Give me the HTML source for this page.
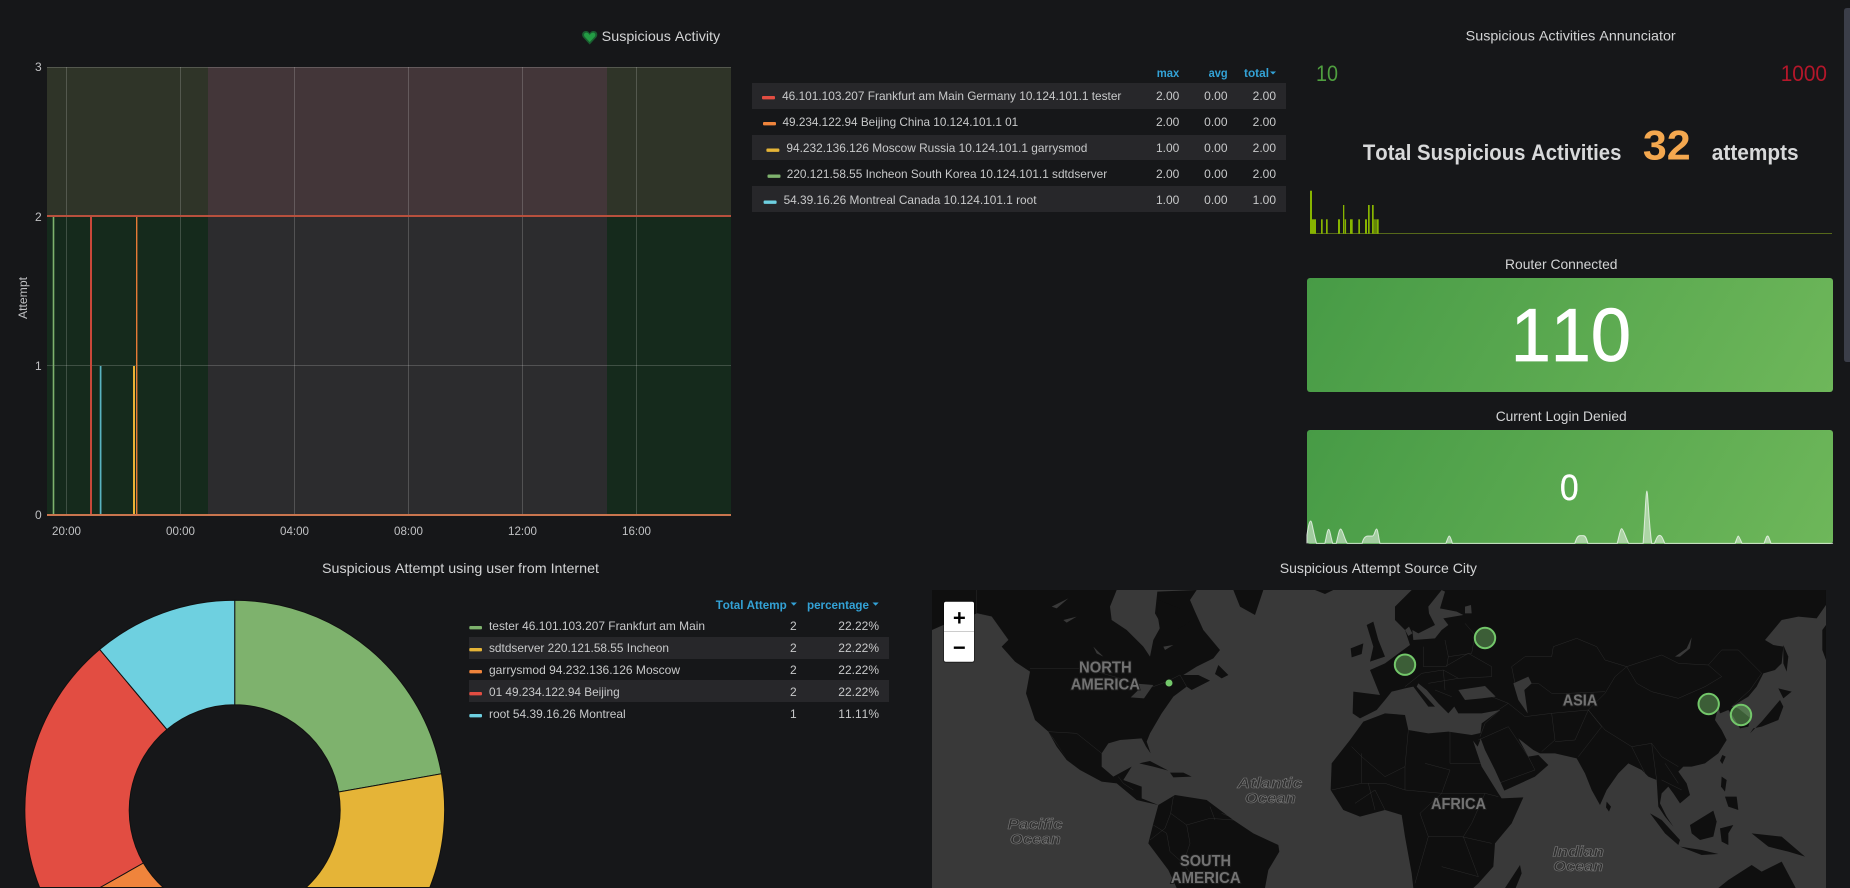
<!DOCTYPE html>
<html><head><meta charset="utf-8"><title>Suspicious Activity</title>
<style>
html,body{margin:0;padding:0;background:#161719;width:1850px;height:888px;overflow:hidden}
svg{display:block}
text{font-family:"Liberation Sans",sans-serif;font-kerning:none}
.t{font-size:14px;fill:#d3d4d5}
.l{font-size:12px;fill:#c8c9ca}
.h{font-size:12px;fill:#33a2d6;font-weight:bold}
.a{font-size:12px;fill:#c0c1c3}
.c{font-size:16px;font-weight:bold;fill:#727272;stroke:#1c1c1c;stroke-width:2px;paint-order:stroke}
.o{font-size:15px;font-style:italic;font-weight:bold;fill:#2e2e2e;stroke:#7a7a7a;stroke-width:.6px}
.b{fill:none;stroke:#3c3c3c;stroke-width:.9;vector-effect:non-scaling-stroke}
.g{stroke:#fff;stroke-opacity:.18;stroke-width:1}
</style></head><body>
<svg width="1850" height="888" viewBox="0 0 1850 888" xmlns="http://www.w3.org/2000/svg">
<defs>
<linearGradient id="g1" gradientUnits="userSpaceOnUse" x1="1348" y1="207" x2="1792" y2="463"><stop offset="0" stop-color="#479b46"/><stop offset="1" stop-color="#6eb75a"/></linearGradient>
<linearGradient id="g2" gradientUnits="userSpaceOnUse" x1="1348" y1="359" x2="1792" y2="615"><stop offset="0" stop-color="#479b46"/><stop offset="1" stop-color="#6eb75a"/></linearGradient>
<clipPath id="mc"><rect x="932" y="590" width="894" height="298"/></clipPath>
</defs>
<rect width="1850" height="888" fill="#161719"/>

<!-- Graph title -->
<path d="M589.7 44.5 L583 37.2 C580.8 34 583 30.6 586.4 31 C588 31.2 589 32.2 589.7 33.2 C590.4 32.2 591.4 31.2 593 31 C596.4 30.6 598.6 34 596.4 37.2 Z" fill="#1a5e30"/>
<path d="M589.7 42 L584.6 36.6 C583.2 34.4 584.6 32.4 586.8 32.7 C588 32.9 589 33.8 589.7 35 C590.4 33.8 591.4 32.9 592.6 32.7 C594.8 32.4 596.2 34.4 594.8 36.6 Z" fill="#239c44"/>
<text class="t" x="601.7" y="41" textLength="118.5" lengthAdjust="spacingAndGlyphs">Suspicious Activity</text>

<!-- Graph -->
<rect x="47" y="67" width="161" height="149" fill="#2f3428"/>
<rect x="208" y="67" width="399" height="149" fill="#433639"/>
<rect x="607" y="67" width="124" height="149" fill="#2f3428"/>
<rect x="47" y="216" width="161" height="299" fill="#152a1c"/>
<rect x="208" y="216" width="399" height="299" fill="#2c2c2e"/>
<rect x="607" y="216" width="124" height="299" fill="#152a1c"/>
<g class="g">
<line x1="66.5" y1="67" x2="66.5" y2="515"/><line x1="180.5" y1="67" x2="180.5" y2="515"/><line x1="294.5" y1="67" x2="294.5" y2="515"/><line x1="408.5" y1="67" x2="408.5" y2="515"/><line x1="522.5" y1="67" x2="522.5" y2="515"/><line x1="636.5" y1="67" x2="636.5" y2="515"/>
<line x1="47" y1="67.5" x2="731" y2="67.5"/><line x1="47" y1="365.5" x2="731" y2="365.5"/>
</g>
<rect x="53" y="216" width="1" height="299" fill="#7eb26d"/>
<rect x="52" y="216" width="3" height="299" fill="#7eb26d" opacity=".3"/>
<rect x="90" y="216" width="2" height="299" fill="#c9483a"/>
<rect x="99.5" y="366" width="2" height="149" fill="#2a6d75"/>
<rect x="100.3" y="366" width="1" height="149" fill="#6ed0e0"/>
<rect x="133" y="366" width="2" height="149" fill="#e9b135"/>
<rect x="136" y="216" width="1.4" height="299" fill="#e57a36"/>
<rect x="47" y="215" width="684" height="2" fill="#b8503d"/>
<rect x="47" y="514" width="684" height="2" fill="#c9754e"/>
<text class="a" x="41.7" y="71" text-anchor="end">3</text>
<text class="a" x="41.7" y="221" text-anchor="end">2</text>
<text class="a" x="41.7" y="370" text-anchor="end">1</text>
<text class="a" x="41.7" y="519" text-anchor="end">0</text>
<text class="a" transform="translate(27,319) rotate(-90)" textLength="42" lengthAdjust="spacingAndGlyphs">Attempt</text>
<text class="a" x="52" y="535" textLength="29" lengthAdjust="spacingAndGlyphs">20:00</text>
<text class="a" x="166" y="535" textLength="29" lengthAdjust="spacingAndGlyphs">00:00</text>
<text class="a" x="280" y="535" textLength="29" lengthAdjust="spacingAndGlyphs">04:00</text>
<text class="a" x="394" y="535" textLength="29" lengthAdjust="spacingAndGlyphs">08:00</text>
<text class="a" x="508" y="535" textLength="29" lengthAdjust="spacingAndGlyphs">12:00</text>
<text class="a" x="622" y="535" textLength="29" lengthAdjust="spacingAndGlyphs">16:00</text>

<!-- Graph legend -->
<rect x="752" y="83" width="534" height="26" fill="#27272a"/>
<rect x="752" y="135" width="534" height="25" fill="#27272a"/>
<rect x="752" y="186" width="534" height="26" fill="#27272a"/>
<text class="h" x="1156.8" y="77" textLength="22.5" lengthAdjust="spacingAndGlyphs">max</text>
<text class="h" x="1208.6" y="77" textLength="19" lengthAdjust="spacingAndGlyphs">avg</text>
<text class="h" x="1244" y="77" textLength="25" lengthAdjust="spacingAndGlyphs">total</text>
<path d="M1270 71.5h6l-3 3z" fill="#33a2d6"/>
<rect x="762" y="96" width="13" height="3.4" rx="1" fill="#e24d42"/>
<rect x="763" y="122" width="13" height="3.4" rx="1" fill="#ef843c"/>
<rect x="766.4" y="148.5" width="13" height="3.4" rx="1" fill="#e5b437"/>
<rect x="767.5" y="174.5" width="13" height="3.4" rx="1" fill="#7eb26d"/>
<rect x="763.6" y="200.5" width="13" height="3.4" rx="1" fill="#6ed0e0"/>
<text class="l" x="782.1" y="100" textLength="339.3" lengthAdjust="spacingAndGlyphs">46.101.103.207 Frankfurt am Main Germany 10.124.101.1 tester</text>
<text class="l" x="782.5" y="126" textLength="235.7" lengthAdjust="spacingAndGlyphs">49.234.122.94 Beijing China 10.124.101.1 01</text>
<text class="l" x="786.4" y="152" textLength="301" lengthAdjust="spacingAndGlyphs">94.232.136.126 Moscow Russia 10.124.101.1 garrysmod</text>
<text class="l" x="786.8" y="178" textLength="320.4" lengthAdjust="spacingAndGlyphs">220.121.58.55 Incheon South Korea 10.124.101.1 sdtdserver</text>
<text class="l" x="783.6" y="204" textLength="252.9" lengthAdjust="spacingAndGlyphs">54.39.16.26 Montreal Canada 10.124.101.1 root</text>
<g class="l" text-anchor="end">
<text class="l" x="1179.3" y="100">2.00</text><text class="l" x="1227.5" y="100">0.00</text><text class="l" x="1276" y="100">2.00</text>
<text class="l" x="1179.3" y="126">2.00</text><text class="l" x="1227.5" y="126">0.00</text><text class="l" x="1276" y="126">2.00</text>
<text class="l" x="1179.3" y="152">1.00</text><text class="l" x="1227.5" y="152">0.00</text><text class="l" x="1276" y="152">2.00</text>
<text class="l" x="1179.3" y="178">2.00</text><text class="l" x="1227.5" y="178">0.00</text><text class="l" x="1276" y="178">2.00</text>
<text class="l" x="1179.3" y="204">1.00</text><text class="l" x="1227.5" y="204">0.00</text><text class="l" x="1276" y="204">1.00</text>
</g>

<!-- Annunciator -->
<text class="t" x="1465.7" y="40.5" textLength="210" lengthAdjust="spacingAndGlyphs">Suspicious Activities Annunciator</text>
<text x="1316" y="81" font-size="22" fill="#4f9e3f" textLength="22" lengthAdjust="spacingAndGlyphs">10</text>
<text x="1780.7" y="81" font-size="22" fill="#b5172a" textLength="46.3" lengthAdjust="spacingAndGlyphs">1000</text>
<text x="1362.9" y="160" font-size="22" font-weight="bold" fill="#d8d9da" textLength="258.5" lengthAdjust="spacingAndGlyphs">Total Suspicious Activities</text>
<text x="1642.9" y="159.5" font-size="42" font-weight="bold" fill="#f4a84f" textLength="47.8" lengthAdjust="spacingAndGlyphs">32</text>
<text x="1711.8" y="160" font-size="22" font-weight="bold" fill="#d8d9da" textLength="86.8" lengthAdjust="spacingAndGlyphs">attempts</text>
<rect x="1310" y="233" width="522" height="1" fill="#56691a"/>
<g fill="#87b400">
<rect x="1310" y="190.7" width="2" height="43"/><rect x="1312" y="219.3" width="4" height="14.5"/>
<rect x="1321" y="219.3" width="1.7" height="14.5"/><rect x="1326" y="219.3" width="1.7" height="14.5"/>
<rect x="1338" y="219.3" width="2" height="14.5"/><rect x="1343" y="205" width="1.3" height="28.7"/>
<rect x="1344.7" y="219.3" width="1.4" height="14.5"/><rect x="1350" y="219.3" width="2.7" height="14.5"/>
<rect x="1358.3" y="219.3" width="1.7" height="14.5"/><rect x="1365" y="219.3" width="2" height="14.5"/>
<rect x="1368" y="205" width="1.7" height="28.7"/><rect x="1372" y="205" width="1.7" height="28.7"/>
<rect x="1373.7" y="219.3" width="1" height="14.5"/><rect x="1375.3" y="219.3" width="1.4" height="14.5"/>
<rect x="1377" y="219.3" width="1.7" height="14.5"/>
</g>

<!-- Router connected -->
<text class="t" x="1505" y="269" textLength="112.5" lengthAdjust="spacingAndGlyphs">Router Connected</text>
<rect x="1307" y="278" width="526" height="114" rx="3" fill="url(#g1)"/>
<text x="1510.7" y="361" font-size="75" fill="#fff" stroke="#fff" stroke-width=".8" textLength="120.3" lengthAdjust="spacingAndGlyphs">110</text>

<!-- Current login denied -->
<text class="t" x="1495.7" y="421" textLength="131" lengthAdjust="spacingAndGlyphs">Current Login Denied</text>
<rect x="1307" y="430" width="526" height="114" rx="3" fill="url(#g2)"/>
<text x="1560" y="500" font-size="36" fill="#fff" stroke="#fff" stroke-width=".4" textLength="18.6" lengthAdjust="spacingAndGlyphs">0</text>
<g transform="translate(1300,470) scale(.3448,.3333)">
<path d="M20,220 L20,195 C24,170 27,153 31,153 C35,153 38,185 48,220 L72,220 C76,205 79,178 83,178 C87,178 90,205 95,220 L105,220 C110,200 113,177 118,177 C123,177 128,205 137,220 L180,220 C184,203 190,198 197,198 L210,198 C216,198 218,177 222,177 C226,177 228,205 232,220 L423,220 C427,210 430,198 433,198 C436,198 439,210 442,220 L797,220 C802,203 806,197 812,197 L822,197 C828,197 831,205 835,220 L920,220 C925,200 929,176 933,176 C937,176 945,203 953,220 L995,220 C1001,140 1003,63 1006,63 C1009,63 1011,150 1020,220 L1028,220 C1034,205 1037,196 1043,196 C1049,196 1052,205 1058,220 L1262,220 C1266,208 1269,198 1271,198 C1273,198 1277,208 1282,220 L1346,220 C1350,208 1353,198 1356,198 C1359,198 1362,208 1366,220 L1546,220" fill="#fff" fill-opacity=".48" stroke="#fff" stroke-opacity=".7" stroke-width="1" vector-effect="non-scaling-stroke"/>
</g>

<!-- Scrollbar -->
<path d="M1850 8H1847Q1844 8 1844 11V359Q1844 362 1847 362H1850Z" fill="#3b3e49"/>

<!-- Pie -->
<text class="t" x="322" y="573" textLength="277" lengthAdjust="spacingAndGlyphs">Suspicious Attempt using user from Internet</text>
<g stroke="#111" stroke-width="1">
<path d="M234.7 600.3 A210 210 0 0 1 441.5 773.8 L338.6 792 A105.5 105.5 0 0 0 234.7 704.8 Z" fill="#7eb26d"/>
<path d="M441.5 773.8 A210 210 0 0 1 429.8 887.5 L306.1 887.5 A105.5 105.5 0 0 0 338.6 792 Z" fill="#e5b437"/>
<path d="M143.3 863 A105.5 105.5 0 0 0 163.3 887.5 L100 887.5 Z" fill="#ef843c"/>
<path d="M39.6 887.5 A210 210 0 0 1 99.7 649.4 L166.9 729.5 A105.5 105.5 0 0 0 143.3 863 L100 887.5 Z" fill="#e24d42"/>
<path d="M99.7 649.4 A210 210 0 0 1 234.7 600.3 L234.7 704.8 A105.5 105.5 0 0 0 166.9 729.5 Z" fill="#6ed0e0"/>
</g>

<!-- Pie legend -->
<rect x="469" y="637" width="420" height="22" fill="#27272a"/>
<rect x="469" y="680" width="420" height="22" fill="#27272a"/>
<text class="h" x="715.7" y="609" textLength="71" lengthAdjust="spacingAndGlyphs">Total Attemp</text>
<path d="M790.7 602.5h6.2l-3.1 3.2z" fill="#33a2d6"/>
<text class="h" x="807" y="609" textLength="62" lengthAdjust="spacingAndGlyphs">percentage</text>
<path d="M872.5 602.5h6.2l-3.1 3.2z" fill="#33a2d6"/>
<rect x="469.3" y="626" width="12.7" height="3.4" rx="1" fill="#7eb26d"/>
<rect x="469.3" y="648" width="12.7" height="3.4" rx="1" fill="#e5b437"/>
<rect x="469.3" y="670" width="12.7" height="3.4" rx="1" fill="#ef843c"/>
<rect x="469.3" y="692" width="12.7" height="3.4" rx="1" fill="#e24d42"/>
<rect x="469.3" y="714" width="12.7" height="3.4" rx="1" fill="#6ed0e0"/>
<text class="l" x="489" y="630" textLength="216" lengthAdjust="spacingAndGlyphs">tester 46.101.103.207 Frankfurt am Main</text>
<text class="l" x="489" y="652" textLength="180" lengthAdjust="spacingAndGlyphs">sdtdserver 220.121.58.55 Incheon</text>
<text class="l" x="489" y="674" textLength="191" lengthAdjust="spacingAndGlyphs">garrysmod 94.232.136.126 Moscow</text>
<text class="l" x="489" y="696" textLength="130.7" lengthAdjust="spacingAndGlyphs">01 49.234.122.94 Beijing</text>
<text class="l" x="489" y="718" textLength="136.7" lengthAdjust="spacingAndGlyphs">root 54.39.16.26 Montreal</text>
<g text-anchor="end">
<text class="l" x="796.7" y="630">2</text><text class="l" x="879" y="630">22.22%</text>
<text class="l" x="796.7" y="652">2</text><text class="l" x="879" y="652">22.22%</text>
<text class="l" x="796.7" y="674">2</text><text class="l" x="879" y="674">22.22%</text>
<text class="l" x="796.7" y="696">2</text><text class="l" x="879" y="696">22.22%</text>
<text class="l" x="796.7" y="718">1</text><text class="l" x="879" y="718">11.11%</text>
</g>

<!-- Map -->
<text class="t" x="1279.7" y="573" textLength="197.3" lengthAdjust="spacingAndGlyphs">Suspicious Attempt Source City</text>
<g clip-path="url(#mc)">
<rect x="932" y="590" width="894" height="298" fill="#393939"/>
<!-- West hemisphere -->
<g transform="translate(920,550) scale(.33333)">
<g fill="#0f0f0f">
<path d="M36,120 L590,120 L570,170 L575,210 L620,240 L670,290 L690,320 L700,270 L725,225 L705,190 L712,125 L830,120 L810,150 L825,185 L850,240 L900,300 L880,325 L830,350 L790,375 L835,375 L870,392 L815,420 L800,410 L760,440 L725,490 L690,550 L680,575 L692,610 L678,590 L665,565 L600,570 L565,580 L545,610 L545,650 L580,680 L635,650 L610,690 L665,710 L665,745 L715,765 L650,750 L590,700 L545,695 L480,660 L440,630 L410,590 L385,545 L345,510 L318,430 L330,365 L285,335 L245,290 L265,270 L215,200 L170,190 L110,215 L70,225 L36,240 Z"/>
<path d="M715,150 L780,175 L810,215 L770,240 L720,240 L712,190 Z"/>
<path d="M940,120 L1030,120 L1005,195 L960,170 Z"/>
<path d="M1185,120 L1240,120 L1215,132 Z"/>
<path d="M895,345 L925,375 L905,385 L885,372 Z"/>
<path d="M658,640 L690,633 L745,662 L700,650 Z"/>
<path d="M750,668 L790,668 L815,680 L760,682 Z"/>
<path d="M715,765 L765,735 L860,750 L940,810 L1000,850 L1075,885 L1078,905 L1045,960 L1035,1014 L770,1014 L745,960 L685,880 L700,820 Z"/>
<path d="M1340,225 L1360,215 L1375,270 L1395,320 L1350,335 L1360,290 Z"/>
<path d="M1292,295 L1330,280 L1325,312 L1295,322 Z"/>
</g>
<g fill="#393939">
<path d="M640,400 L700,405 L672,445 L632,442 L655,420 Z"/>
<path d="M520,290 L550,320 L530,310 Z"/>
<path d="M385,545 L440,625 L400,565 Z"/>
<path d="M395,170 L445,145 L410,175 Z"/>
<path d="M430,210 L470,200 L440,218 Z"/>
<path d="M730,290 L760,285 L735,300 Z"/>
</g>
<g class="b">
<path d="M170,120 L170,190 L215,200 L265,270"/>
<path d="M330,355 L475,355 L530,365 L600,385 L640,400 L700,410 L740,395 L780,375 L800,410"/>
<path d="M385,545 L470,550 L520,590 L545,610"/>
<path d="M595,680 L610,700 L640,720"/>
<path d="M760,740 L752,790 L800,825 L870,805 L940,810"/>
<path d="M870,770 L885,810 M905,790 L930,800"/>
<path d="M700,825 L740,850 L750,905 L790,940 L830,1000"/>
<path d="M690,870 L735,835 L752,790"/>
<path d="M800,825 L810,880 L790,940"/>
</g>
</g>
<!-- East hemisphere -->
<g transform="translate(1385,550) scale(.33333)">
<g fill="#0f0f0f">
<path d="M80,120 L1323,120 L1323,165 L1295,205 L1240,200 L1190,210 L1140,270 L1165,285 L1195,290 L1190,340 L1170,360 L1135,370 L1115,410 L1090,440 L1040,470 L1060,475 L1097,505 L1090,530 L1065,535 L1045,500 L1030,480 L1005,490 L1000,470 L990,510 L1010,540 L1025,570 L1000,610 L960,640 L920,650 L895,650 L880,665 L905,700 L915,735 L885,760 L865,730 L850,710 L830,730 L825,760 L845,800 L865,830 L840,800 L820,770 L815,690 L790,680 L770,660 L730,640 L700,670 L665,720 L645,765 L620,720 L600,670 L575,625 L510,610 L465,610 L445,600 L400,565 L430,620 L460,615 L490,645 L450,680 L358,722 L330,660 L300,600 L285,560 L290,520 L345,480 L290,490 L220,490 L205,465 L225,450 L190,490 L160,460 L125,420 L100,400 L95,410 L150,470 L130,470 L85,410 L60,415 L20,425 L0,450 L-25,480 L-75,505 L-97,490 L-95,425 L-15,435 L-45,360 L0,340 L75,285 L60,240 L30,210 L30,170 Z"/>
<path d="M-65,515 L0,490 L60,495 L70,540 L130,550 L190,545 L260,555 L292,548 L285,572 L278,590 L264,572 L290,650 L340,730 L350,745 L415,742 L380,820 L330,880 L325,950 L280,1000 L265,1014 L85,1014 L80,970 L60,860 L50,795 L0,780 L-75,800 L-125,780 L-163,720 L-160,640 L-105,570 Z"/>
<path d="M360,1014 L405,945 L410,970 L392,1014 Z"/>
<path d="M665,755 L678,770 L672,785 L663,772 Z"/>
<path d="M1095,550 L1130,515 L1185,450 L1195,470 L1180,510 L1130,530 L1105,535 Z"/>
<path d="M1180,415 L1220,425 L1195,445 Z"/>
<path d="M1195,285 L1210,320 L1205,365 L1195,340 Z"/>
<path d="M1012,615 L1022,620 L1012,642 L1005,632 Z"/>
<path d="M1010,680 L1025,690 L1020,725 L1008,710 Z"/>
<path d="M1020,740 L1055,740 L1060,780 L1030,770 Z"/>
<path d="M795,790 L830,810 L885,870 L880,885 L840,850 Z"/>
<path d="M885,890 L950,900 L1000,912 L950,915 Z"/>
<path d="M915,825 L985,782 L995,815 L985,860 L945,870 L920,850 Z"/>
<path d="M1005,835 L1045,825 L1030,850 L1030,885 L1010,875 Z"/>
<path d="M1100,850 L1190,860 L1260,920 L1210,905 L1150,890 Z"/>
<path d="M1000,1014 L1030,990 L1100,945 L1130,965 L1190,935 L1230,1010 L1232,1014 Z"/>
<path d="M1312,240 L1323,225 L1323,330 L1312,300 Z"/>
</g>
<g fill="#393939">
<path d="M170,120 L130,170 L132,190 L150,225 L100,250 L82,240 L85,270 L150,265 L170,240 L190,225 L175,205 L235,195 L215,185 L165,175 L180,125 Z"/>
<path d="M60,240 L72,230 L82,250 L70,258 Z"/>
<path d="M220,420 L300,408 L332,440 L290,445 L240,450 Z"/>
<path d="M385,400 L430,380 L440,400 L418,420 L428,490 L400,450 Z"/>
<path d="M240,170 L258,165 L260,190 L240,190 Z"/>
<path d="M870,320 L905,295 L920,262 L915,295 L885,320 Z"/>
</g>
<g class="b">
<path d="M380,350 L420,320 L500,320 L505,290 L575,265 L635,290 L660,330 L725,350"/>
<path d="M725,350 L770,335 L830,315 L880,340 L970,345 L1010,380 L960,410 L880,445 L800,425 L755,400 Z"/>
<path d="M970,345 L1010,300 L1060,300 L1130,370 L1095,420 L1040,470"/>
<path d="M725,350 L690,380 L660,430 L610,480 L660,540 L740,590 L800,580 L830,620 L880,650"/>
<path d="M380,350 L390,400 L460,400 L500,430 L550,430 L660,425"/>
<path d="M370,460 L420,500 L500,490 L510,570 L470,605"/>
<path d="M500,490 L610,480 L570,570 L510,575"/>
<path d="M610,480 L650,530 L580,620"/>
<path d="M740,590 L780,670 M800,580 L815,690 M840,640 L880,700 M830,690 L890,720"/>
<path d="M115,290 L115,350 L180,350 L250,310 L320,350 L320,380 L220,385 L175,360 L110,370 L60,410"/>
<path d="M180,270 L190,320 L260,310 L270,255 L240,220 M190,320 L185,350"/>
<path d="M130,400 L220,385 M150,420 L200,440 M175,360 L180,420"/>
<path d="M320,440 L370,460 L340,480 M345,480 L300,520 L285,560"/>
<path d="M280,570 L370,530 L430,620 M340,700 L450,660 L430,620"/>
<path d="M-100,590 L-70,620 L0,680 L60,650 L70,540"/>
<path d="M195,545 L195,640 L300,640"/>
<path d="M120,640 L195,660 L170,730 L60,720 L0,700 L-70,700 L-160,720"/>
<path d="M-70,610 L-70,700 M60,650 L60,720"/>
<path d="M170,730 L105,790 L130,860 L230,860 L320,880"/>
<path d="M170,730 L300,730 L340,740 M300,730 L260,820 L235,860 M130,860 L90,1000 M235,860 L280,980 M170,950 L280,980"/>
<path d="M-90,760 L-30,720 L0,780 M-50,700 L-30,780"/>
</g>
</g>
<text class="c" x="1079" y="672.3" textLength="52.7" lengthAdjust="spacingAndGlyphs">NORTH</text>
<text class="c" x="1070.7" y="689.5" textLength="69.3" lengthAdjust="spacingAndGlyphs">AMERICA</text>
<text class="c" x="1180" y="866" textLength="51" lengthAdjust="spacingAndGlyphs">SOUTH</text>
<text class="c" x="1170.7" y="883" textLength="70" lengthAdjust="spacingAndGlyphs">AMERICA</text>
<text class="c" x="1562.7" y="705.7" textLength="34.6" lengthAdjust="spacingAndGlyphs">ASIA</text>
<text class="c" x="1431" y="809" textLength="55" lengthAdjust="spacingAndGlyphs">AFRICA</text>
<text class="o" x="1237.3" y="788" textLength="65" lengthAdjust="spacingAndGlyphs">Atlantic</text>
<text class="o" x="1245" y="803" textLength="50.7" lengthAdjust="spacingAndGlyphs">Ocean</text>
<text class="o" x="1007.7" y="829" textLength="55" lengthAdjust="spacingAndGlyphs">Pacific</text>
<text class="o" x="1010" y="844" textLength="50.7" lengthAdjust="spacingAndGlyphs">Ocean</text>
<text class="o" x="1552.7" y="856.3" textLength="51.3" lengthAdjust="spacingAndGlyphs">Indian</text>
<text class="o" x="1553.3" y="871" textLength="50" lengthAdjust="spacingAndGlyphs">Ocean</text>
<g fill="#73bf69" fill-opacity=".45" stroke="#73c76a" stroke-width="2">
<circle cx="1485" cy="638" r="10.2"/><circle cx="1405" cy="664.7" r="10.2"/><circle cx="1708.7" cy="704" r="10.2"/><circle cx="1741" cy="715" r="10.2"/>
</g>
<circle cx="1169" cy="683" r="3.5" fill="#73c76a"/>
<!-- Zoom control -->
<rect x="943" y="601" width="32" height="62" rx="3" fill="#000" opacity=".35"/>
<rect x="944" y="601.7" width="30" height="60" rx="2" fill="#fff"/>
<rect x="944" y="631" width="30" height="1" fill="#ccc"/>
<text x="959.3" y="625.5" font-size="22" font-weight="bold" text-anchor="middle" fill="#000" style="font-family:'Liberation Mono',monospace">+</text>
<text x="959.3" y="655" font-size="22" font-weight="bold" text-anchor="middle" fill="#000" style="font-family:'Liberation Mono',monospace">−</text>
</g>
</svg>
</body></html>
